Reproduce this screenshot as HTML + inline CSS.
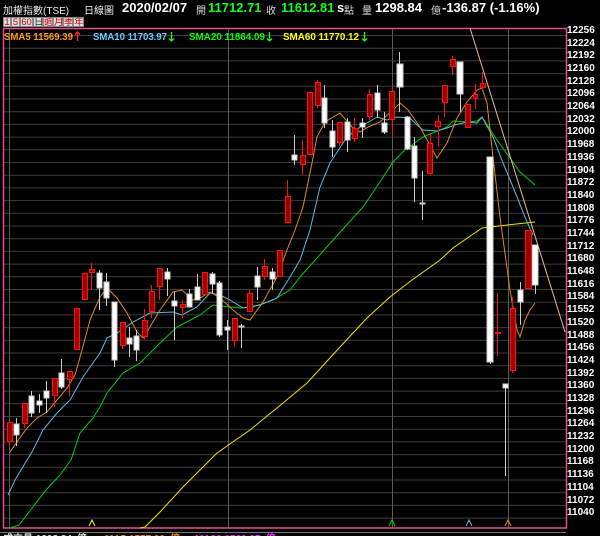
<!DOCTYPE html>
<html><head><meta charset="utf-8"><style>
html,body{margin:0;padding:0;background:#000;width:600px;height:536px;overflow:hidden;position:relative;font-family:"Liberation Sans","Noto Sans CJK TC",sans-serif;}
.t{position:absolute;white-space:nowrap;font-weight:bold;}
.btn{position:absolute;top:17px;height:10px;background:#ddd;color:#c00;font-size:9.5px;line-height:10px;text-align:center;border:1px solid #888;box-sizing:border-box;overflow:hidden}
svg{position:absolute;left:0;top:0}
</style></head><body>
<div class="t" style="left:3px;top:2px;font-size:10px;color:#eee;font-weight:normal">加權指數(TSE)</div>
<div class="t" style="left:84px;top:2px;font-size:10px;color:#eee;font-weight:normal">日線圖</div>
<div class="t" style="left:122px;top:0px;font-size:13px;color:#fff">2020/02/07</div>
<div class="t" style="left:196px;top:2px;font-size:10px;color:#ddd;font-weight:normal">開</div>
<div class="t" style="left:208px;top:0px;font-size:13px;color:#1f1">11712.71</div>
<div class="t" style="left:266px;top:2px;font-size:10px;color:#ddd;font-weight:normal">收</div>
<div class="t" style="left:281px;top:0px;font-size:13px;color:#1f1">11612.81</div>
<div class="t" style="left:337px;top:0px;font-size:13px;color:#fff">s</div>
<div class="t" style="left:344px;top:2px;font-size:10px;color:#ddd;font-weight:normal">點</div>
<div class="t" style="left:362px;top:2px;font-size:10px;color:#ddd;font-weight:normal">量</div>
<div class="t" style="left:375px;top:0px;font-size:13px;color:#fff">1298.84</div>
<div class="t" style="left:431px;top:2px;font-size:10px;color:#ddd;font-weight:normal">億</div>
<div class="t" style="left:442px;top:0px;font-size:13px;color:#fff">-136.87 (-1.16%)</div>

<div class="btn" style="left:3px;width:8px">1</div>
<div class="btn" style="left:11px;width:9px">5</div>
<div class="btn" style="left:20px;width:13px">60</div>
<div class="btn" style="left:33px;width:10px;color:#333">日</div>
<div class="btn" style="left:43px;width:10px">週</div>
<div class="btn" style="left:53px;width:10px">月</div>
<div class="btn" style="left:63px;width:10px">季</div>
<div class="btn" style="left:73px;width:11px">年</div>

<svg width="600" height="536" viewBox="0 0 600 536">
<g stroke="#3c3c3c" stroke-width="1">
<line x1="4" x2="566" y1="35.5" y2="35.5"/><line x1="4" x2="566" y1="48.2" y2="48.2"/><line x1="4" x2="566" y1="60.9" y2="60.9"/><line x1="4" x2="566" y1="73.6" y2="73.6"/><line x1="4" x2="566" y1="86.3" y2="86.3"/><line x1="4" x2="566" y1="99" y2="99"/><line x1="4" x2="566" y1="111.7" y2="111.7"/><line x1="4" x2="566" y1="124.4" y2="124.4"/><line x1="4" x2="566" y1="137.1" y2="137.1"/><line x1="4" x2="566" y1="149.8" y2="149.8"/><line x1="4" x2="566" y1="162.5" y2="162.5"/><line x1="4" x2="566" y1="175.2" y2="175.2"/><line x1="4" x2="566" y1="187.9" y2="187.9"/><line x1="4" x2="566" y1="200.6" y2="200.6"/><line x1="4" x2="566" y1="213.3" y2="213.3"/><line x1="4" x2="566" y1="226" y2="226"/><line x1="4" x2="566" y1="238.7" y2="238.7"/><line x1="4" x2="566" y1="251.4" y2="251.4"/><line x1="4" x2="566" y1="264.1" y2="264.1"/><line x1="4" x2="566" y1="276.8" y2="276.8"/><line x1="4" x2="566" y1="289.5" y2="289.5"/><line x1="4" x2="566" y1="302.2" y2="302.2"/><line x1="4" x2="566" y1="314.9" y2="314.9"/><line x1="4" x2="566" y1="327.6" y2="327.6"/><line x1="4" x2="566" y1="340.3" y2="340.3"/><line x1="4" x2="566" y1="353" y2="353"/><line x1="4" x2="566" y1="365.7" y2="365.7"/><line x1="4" x2="566" y1="378.4" y2="378.4"/><line x1="4" x2="566" y1="391.1" y2="391.1"/><line x1="4" x2="566" y1="403.8" y2="403.8"/><line x1="4" x2="566" y1="416.5" y2="416.5"/><line x1="4" x2="566" y1="429.2" y2="429.2"/><line x1="4" x2="566" y1="441.9" y2="441.9"/><line x1="4" x2="566" y1="454.6" y2="454.6"/><line x1="4" x2="566" y1="467.3" y2="467.3"/><line x1="4" x2="566" y1="480" y2="480"/><line x1="4" x2="566" y1="492.7" y2="492.7"/><line x1="4" x2="566" y1="505.4" y2="505.4"/><line x1="4" x2="566" y1="518.1" y2="518.1"/>
</g>
<g stroke="#5a5a5a" stroke-width="1">
<line x1="9.5" x2="9.5" y1="29" y2="528"/><line x1="228.5" x2="228.5" y1="29" y2="528"/><line x1="392.5" x2="392.5" y1="29" y2="528"/><line x1="508.5" x2="508.5" y1="29" y2="528"/>
</g>
<rect x="3.5" y="28.5" width="563" height="499.5" fill="none" stroke="#e0508e" stroke-width="1.5"/>

<polyline fill="none" stroke="#e6e600" stroke-width="1" points="140,528 145,527 160,512 183,487 200,470 217,453 250,430 283,403 307,383 340,347 367,318 390,297 412,280 440,260 453,248 482,228 507,225 535,222"/>
<polyline fill="none" stroke="#00d000" stroke-width="1" points="10,528 19,525 46,490 60,475 71,460 80,433 93,418 100,407 107,393 123,373 140,363 160,343 177,327 200,315 213,305 240,308 253,307 273,300 290,290 300,277 342,230 363,207 380,182 393,162 405,150 423,137 447,127 453,121 467,122 477,121 482,117 497,140 510,158 520,172 535,185"/>
<polyline fill="none" stroke="#60b8e0" stroke-width="1" points="8,495 15,480 27,460 32,452 43,430 57,413 70,400 83,377 100,353 107,338 117,333 133,322 150,313 173,312 182,315 197,307 210,293 220,295 230,300 243,308 260,305 277,298 290,277 300,260 310,230 320,187 330,163 347,137 360,127 372,120 377,117 387,120 397,117 410,118 417,125 423,130 437,131 447,128 455,125 467,122 477,123 482,117 493,137 503,163 513,187 527,222 533,235"/>
<polyline fill="none" stroke="#e08a1a" stroke-width="1" points="10,452 17,442 27,428 37,418 47,412 57,400 67,388 75,375 82,350 90,320 100,297 107,288 117,298 127,313 137,332 143,338 147,332 160,310 173,292 182,290 193,300 200,298 210,292 220,298 233,310 243,318 250,320 263,302 277,277 287,250 295,230 303,207 312,163 317,137 325,122 340,113 352,127 360,132 368,127 380,122 400,103 408,110 420,127 437,158 447,143 457,118 467,102 477,90 482,88 487,103 493,157 500,217 510,290 517,330 520,337 525,320 530,310 535,303"/>
<line x1="470" y1="28" x2="565" y2="332" stroke="#e8b890" stroke-width="1"/>

<g stroke="#ccc" stroke-width="1" fill="#fff">
<line x1="16.5" y1="418" x2="16.5" y2="446"/><rect x="14" y="424" width="5" height="11"/>
<line x1="31.5" y1="391" x2="31.5" y2="417"/><rect x="29" y="396" width="5" height="17"/>
<line x1="39.5" y1="394" x2="39.5" y2="413"/><rect x="37" y="401" width="5" height="4"/>
<line x1="46.5" y1="381" x2="46.5" y2="413"/><rect x="44" y="391" width="5" height="7"/>
<line x1="61.5" y1="359" x2="61.5" y2="389"/><rect x="59" y="373" width="5" height="14"/>
<line x1="99.5" y1="270" x2="99.5" y2="310"/><rect x="97" y="273" width="5" height="15"/>
<line x1="106.5" y1="273" x2="106.5" y2="306"/><rect x="104" y="282" width="5" height="16"/>
<line x1="114.5" y1="302" x2="114.5" y2="367"/><rect x="112" y="302" width="5" height="58"/>
<line x1="129.5" y1="327" x2="129.5" y2="357"/><rect x="127" y="338" width="5" height="6"/>
<line x1="136.5" y1="330" x2="136.5" y2="361"/><rect x="134" y="336" width="5" height="14"/>
<line x1="167.5" y1="268" x2="167.5" y2="296"/><rect x="165" y="272" width="5" height="7"/>
<line x1="174.5" y1="292" x2="174.5" y2="340"/><rect x="172" y="301" width="5" height="5"/>
<line x1="189.5" y1="289" x2="189.5" y2="307"/><rect x="187" y="294" width="5" height="13"/>
<line x1="197.5" y1="274" x2="197.5" y2="300"/><rect x="195" y="287" width="5" height="13"/>
<line x1="212.5" y1="272" x2="212.5" y2="294"/><rect x="210" y="274" width="5" height="10"/>
<line x1="219.5" y1="281" x2="219.5" y2="337"/><rect x="217" y="283" width="5" height="52"/>
<line x1="227.5" y1="320" x2="227.5" y2="350"/><rect x="225" y="327" width="5" height="3"/>
<line x1="241.5" y1="324" x2="241.5" y2="348"/><rect x="239" y="326" width="5" height="1"/>
<line x1="257.5" y1="267" x2="257.5" y2="300"/><rect x="255" y="276" width="5" height="11"/>
<line x1="272.5" y1="268" x2="272.5" y2="290"/><rect x="270" y="272" width="5" height="7"/>
<line x1="294.5" y1="135" x2="294.5" y2="165"/><rect x="292" y="155" width="5" height="5"/>
<line x1="324.5" y1="85" x2="324.5" y2="128"/><rect x="322" y="98" width="5" height="25"/>
<line x1="332.5" y1="120" x2="332.5" y2="157"/><rect x="330" y="131" width="5" height="16"/>
<line x1="347.5" y1="118" x2="347.5" y2="152"/><rect x="345" y="122" width="5" height="18"/>
<line x1="362.5" y1="118" x2="362.5" y2="138"/><rect x="360" y="123" width="5" height="4"/>
<line x1="377.5" y1="85" x2="377.5" y2="118"/><rect x="375" y="93" width="5" height="17"/>
<line x1="384.5" y1="112" x2="384.5" y2="134"/><rect x="382" y="123" width="5" height="9"/>
<line x1="399.5" y1="52" x2="399.5" y2="112"/><rect x="397" y="64" width="6" height="23"/>
<line x1="407.5" y1="116" x2="407.5" y2="150"/><rect x="405" y="117" width="5" height="32"/>
<line x1="414.5" y1="137" x2="414.5" y2="202"/><rect x="412" y="146" width="5" height="32"/>
<line x1="422.5" y1="171" x2="422.5" y2="220"/><rect x="420" y="203" width="5" height="1"/>
<line x1="460.5" y1="62" x2="460.5" y2="112"/><rect x="457" y="62" width="6" height="32"/>
<line x1="490.5" y1="157" x2="490.5" y2="364"/><rect x="487" y="157" width="6" height="205"/>
<line x1="505.5" y1="384" x2="505.5" y2="476"/><rect x="503" y="384" width="5" height="4"/>
<line x1="520.5" y1="282" x2="520.5" y2="325"/><rect x="518" y="290" width="5" height="12"/>
<line x1="535.5" y1="245" x2="535.5" y2="294"/><rect x="532" y="245" width="6" height="40"/>
</g>
<g stroke="#ff1010" stroke-width="1" fill="#9a0000">
<line x1="9.5" y1="420" x2="9.5" y2="446"/><rect x="7.5" y="422.5" width="5" height="19"/>
<line x1="24.5" y1="403" x2="24.5" y2="428"/><rect x="22.5" y="403.5" width="5" height="20"/>
<line x1="54.5" y1="378" x2="54.5" y2="407"/><rect x="52.5" y="378.5" width="5" height="17"/>
<line x1="69.5" y1="371" x2="69.5" y2="396"/><rect x="67.5" y="371.5" width="5" height="8"/>
<rect x="74.5" y="308.5" width="5" height="41"/>
<rect x="82.5" y="273.5" width="5" height="26"/>
<line x1="91.5" y1="263" x2="91.5" y2="290"/><rect x="89.5" y="269.5" width="5" height="3"/>
<line x1="122.5" y1="322" x2="122.5" y2="349"/><rect x="120.5" y="322.5" width="5" height="23"/>
<line x1="144.5" y1="309" x2="144.5" y2="340"/><rect x="142.5" y="320.5" width="5" height="16"/>
<line x1="151.5" y1="285" x2="151.5" y2="318"/><rect x="149.5" y="291.5" width="5" height="20"/>
<line x1="159.5" y1="268" x2="159.5" y2="300"/><rect x="157.5" y="268.5" width="5" height="18"/>
<line x1="182.5" y1="300" x2="182.5" y2="318"/><rect x="180.5" y="304.5" width="5" height="3"/>
<rect x="202.5" y="272.5" width="5" height="22"/>
<line x1="234.5" y1="318" x2="234.5" y2="347"/><rect x="232.5" y="318.5" width="5" height="22"/>
<line x1="249.5" y1="290" x2="249.5" y2="312"/><rect x="247.5" y="293.5" width="5" height="18"/>
<line x1="264.5" y1="259" x2="264.5" y2="280"/><rect x="262.5" y="266.5" width="5" height="10"/>
<rect x="277.5" y="250.5" width="5" height="26"/>
<line x1="287.5" y1="180" x2="287.5" y2="223"/><rect x="285.5" y="196.5" width="5" height="26"/>
<line x1="302.5" y1="140" x2="302.5" y2="175"/><rect x="300.5" y="155.5" width="5" height="9"/>
<rect x="307.5" y="92.5" width="5" height="62"/>
<line x1="317.5" y1="80" x2="317.5" y2="108"/><rect x="315.5" y="82.5" width="5" height="23"/>
<line x1="339.5" y1="122" x2="339.5" y2="146"/><rect x="337.5" y="122.5" width="5" height="20"/>
<line x1="354.5" y1="118" x2="354.5" y2="142"/><rect x="352.5" y="128.5" width="5" height="10"/>
<line x1="369.5" y1="89" x2="369.5" y2="120"/><rect x="367.5" y="94.5" width="5" height="22"/>
<line x1="392.5" y1="87" x2="392.5" y2="136"/><rect x="389.5" y="91.5" width="5" height="28"/>
<line x1="430.5" y1="134" x2="430.5" y2="175"/><rect x="427.5" y="143.5" width="5" height="30"/>
<line x1="438.5" y1="115" x2="438.5" y2="147"/><rect x="435.5" y="121.5" width="5" height="5"/>
<line x1="444.5" y1="85" x2="444.5" y2="117"/><rect x="442.5" y="85.5" width="5" height="17"/>
<line x1="452.5" y1="56" x2="452.5" y2="75"/><rect x="450.5" y="59.5" width="5" height="7"/>
<rect x="465.5" y="104.5" width="5" height="23"/>
<line x1="475.5" y1="84" x2="475.5" y2="109"/><rect x="473.5" y="94.5" width="4" height="4"/>
<line x1="482.5" y1="72" x2="482.5" y2="90"/><rect x="480.5" y="83.5" width="5" height="4"/>
<line x1="497.5" y1="293" x2="497.5" y2="356"/><rect x="495.5" y="332.5" width="5" height="1"/>
<line x1="512.5" y1="297" x2="512.5" y2="373"/><rect x="510.5" y="308.5" width="5" height="62"/>
<rect x="525.5" y="230.5" width="6" height="58"/>
</g>

<g fill="none" stroke-width="1">
<polyline points="89,526 92,520 95,526" stroke="#ff0"/>
<polyline points="389,526 392,520 395,526" stroke="#0d0"/>
<polyline points="466,526 469,520 472,526" stroke="#6bd"/>
<polyline points="505,526 508,520 511,526" stroke="#e80"/>
</g>

<g font-family="Liberation Sans, sans-serif" font-weight="bold" font-size="10" fill="#fff" text-anchor="start">
<text x="567" y="33">12256</text><text x="567" y="46">12224</text><text x="567" y="58">12192</text><text x="567" y="71">12160</text><text x="567" y="84">12128</text><text x="567" y="96">12096</text><text x="567" y="109">12064</text><text x="567" y="122">12032</text><text x="567" y="134">12000</text><text x="567" y="147">11968</text><text x="567" y="160">11936</text><text x="567" y="173">11904</text><text x="567" y="185">11872</text><text x="567" y="198">11840</text><text x="567" y="211">11808</text><text x="567" y="223">11776</text><text x="567" y="236">11744</text><text x="567" y="249">11712</text><text x="567" y="261">11680</text><text x="567" y="274">11648</text><text x="567" y="287">11616</text><text x="567" y="299">11584</text><text x="567" y="312">11552</text><text x="567" y="325">11520</text><text x="567" y="338">11488</text><text x="567" y="350">11456</text><text x="567" y="363">11424</text><text x="567" y="376">11392</text><text x="567" y="388">11360</text><text x="567" y="401">11328</text><text x="567" y="414">11296</text><text x="567" y="426">11264</text><text x="567" y="439">11232</text><text x="567" y="452">11200</text><text x="567" y="464">11168</text><text x="567" y="477">11136</text><text x="567" y="490">11104</text><text x="567" y="503">11072</text><text x="567" y="515">11040</text>
</g>

<g font-family="Liberation Sans, sans-serif" font-weight="bold" font-size="10.5">
<text x="4" y="40" fill="#ff9a1a" textLength="69" lengthAdjust="spacingAndGlyphs">SMA5 11569.39</text>
<text x="93" y="40" fill="#6cf" textLength="74" lengthAdjust="spacingAndGlyphs">SMA10 11703.97</text>
<text x="189" y="40" fill="#0f0" textLength="76" lengthAdjust="spacingAndGlyphs">SMA20 11864.09</text>
<text x="283" y="40" fill="#ff0" textLength="76" lengthAdjust="spacingAndGlyphs">SMA60 11770.12</text>
</g>
<g fill="none" stroke-width="1.3">
<path d="M77.5 41V32M75 34.5L77.5 32L80 34.5" stroke="#f22"/>
<path d="M171.5 32V41M169 38.5L171.5 41L174 38.5" stroke="#2e2"/>
<path d="M269.5 32V41M267 38.5L269.5 41L272 38.5" stroke="#2e2"/>
<path d="M364.5 32V41M362 38.5L364.5 41L367 38.5" stroke="#2e2"/>
</g>
<line x1="0" y1="532.5" x2="566" y2="532.5" stroke="#777"/>
<g font-family="Liberation Sans, Noto Sans CJK TC, sans-serif" font-weight="bold" font-size="10">
<text x="3" y="542" fill="#ddd">成交量 1298.84↑億</text>
<text x="105" y="542" fill="#e80">MA5 1557.00↑億</text>
<text x="195" y="542" fill="#f2f">MA20 1569.97↑億</text>
</g>
</svg>
</body></html>
